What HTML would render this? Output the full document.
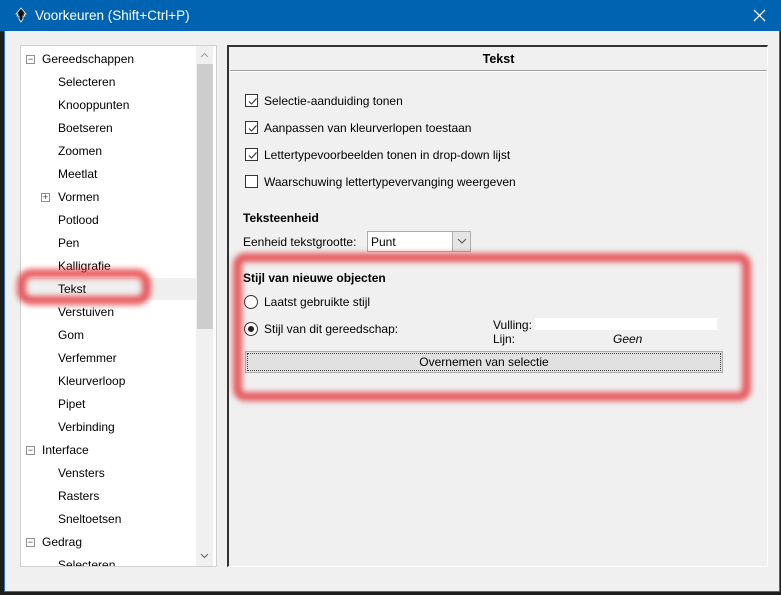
<!DOCTYPE html>
<html><head><meta charset="utf-8"><style>
*{box-sizing:border-box;margin:0;padding:0}
body{width:781px;height:595px;overflow:hidden;background:#1e1e1e;font-family:"Liberation Sans",sans-serif;font-size:12px;color:#000;position:relative}
.abs{position:absolute}
#win{left:4px;top:0;width:776px;height:592px;background:#f0f0f0;border:1px solid #2b6fb5;border-top:none}
#title{left:0;top:0;width:781px;height:31px;background:#0063b1;color:#fff;font-size:13.5px}
#tree{left:20px;top:45px;width:197px;height:522px;background:#fff;border:1px solid #d0d0d0;overflow:hidden}
.ti{position:absolute;left:37px;height:22px;line-height:22px;font-size:12px;color:#000}
.tl{left:21px}
.pm{position:absolute;left:5px;width:9px;height:9px;border:1px solid #909090;font-size:9px;line-height:7px;text-align:center;color:#333}
#sb{left:196px;top:46px;width:17px;height:520px;background:#f0f0f0}
#thumb{left:197px;top:64px;width:16px;height:265px;background:#cdcdcd}
#right{left:227px;top:45px;width:541px;height:522px;border-top:2px solid #333;border-left:2px solid #333;border-right:1px solid #fff;border-bottom:1px solid #fff}
.cb{position:absolute;left:245px;width:13px;height:13px;border:1px solid #333;background:#fff}
.cb svg{position:absolute;left:1px;top:1px}
.lbl{position:absolute;left:264px;font-size:12px}
.red{position:absolute;border:9px solid rgba(225,40,45,.75);border-radius:12px;filter:blur(3px)}
.rad{position:absolute;left:244px;width:14px;height:14px;border:1px solid #333;border-radius:50%;background:#fff}
</style></head><body>
<div id="win" class="abs"></div>
<div id="title" class="abs">
<svg class="abs" style="left:13px;top:7px" width="16" height="16" viewBox="0 0 16 16"><path d="M8 1 L13 7 L11 7 L12 9 L10 9 L10 12 L8 15 L6 12 L6 9 L4 9 L5 7 L3 7 Z" fill="#111" stroke="#fff" stroke-width=".8"/></svg>
<span class="abs" style="left:35px;top:8px">Voorkeuren (Shift+Ctrl+P)</span>
<svg class="abs" style="left:753px;top:9px" width="13" height="13"><path d="M1 1L12 12M12 1L1 12" stroke="#fff" stroke-width="1.3"/></svg>
</div>
<div id="tree" class="abs">
<div class="pm" style="top:9px">−</div><div class="ti tl" style="top:2px">Gereedschappen</div>
<div class="ti" style="top:25px">Selecteren</div>
<div class="ti" style="top:48px">Knooppunten</div>
<div class="ti" style="top:71px">Boetseren</div>
<div class="ti" style="top:94px">Zoomen</div>
<div class="ti" style="top:117px">Meetlat</div>
<div class="pm" style="left:20px;top:147px">+</div><div class="ti" style="top:140px">Vormen</div>
<div class="ti" style="top:163px">Potlood</div>
<div class="ti" style="top:186px">Pen</div>
<div class="ti" style="top:209px">Kalligrafie</div>
<div class="abs" style="left:0;top:232px;width:176px;height:22px;background:#efefef"></div>
<div class="ti" style="top:232px">Tekst</div>
<div class="ti" style="top:255px">Verstuiven</div>
<div class="ti" style="top:278px">Gom</div>
<div class="ti" style="top:301px">Verfemmer</div>
<div class="ti" style="top:324px">Kleurverloop</div>
<div class="ti" style="top:347px">Pipet</div>
<div class="ti" style="top:370px">Verbinding</div>
<div class="pm" style="top:400px">−</div><div class="ti tl" style="top:393px">Interface</div>
<div class="ti" style="top:416px">Vensters</div>
<div class="ti" style="top:439px">Rasters</div>
<div class="ti" style="top:462px">Sneltoetsen</div>
<div class="pm" style="top:492px">−</div><div class="ti tl" style="top:485px">Gedrag</div>
<div class="ti" style="top:508px">Selecteren</div>
</div>
<div id="sb" class="abs"></div>
<div id="thumb" class="abs"></div>
<svg class="abs" style="left:200px;top:52px" width="9" height="6"><path d="M1 5L4.5 1.5L8 5" stroke="#a0a0a0" fill="none"/></svg>
<svg class="abs" style="left:200px;top:553px" width="9" height="6"><path d="M1 1L4.5 4.5L8 1" stroke="#606060" fill="none"/></svg>
<div id="right" class="abs"></div>
<div class="abs" style="left:230px;top:70px;width:537px;height:2px;border-top:1px solid #a0a0a0;border-bottom:1px solid #fff"></div>
<div class="abs" style="left:230px;top:52px;width:537px;text-align:center;font-weight:bold;font-size:12.5px">Tekst</div>

<div class="cb" style="top:94px"><svg width="11" height="11"><path d="M2 5.5L4.5 8L9.5 2.5" stroke="#333" fill="none" stroke-width="1.1"/></svg></div>
<div class="lbl" style="top:94px">Selectie-aanduiding tonen</div>
<div class="cb" style="top:121px"><svg width="11" height="11"><path d="M2 5.5L4.5 8L9.5 2.5" stroke="#333" fill="none" stroke-width="1.1"/></svg></div>
<div class="lbl" style="top:121px">Aanpassen van kleurverlopen toestaan</div>
<div class="cb" style="top:148px"><svg width="11" height="11"><path d="M2 5.5L4.5 8L9.5 2.5" stroke="#333" fill="none" stroke-width="1.1"/></svg></div>
<div class="lbl" style="top:148px">Lettertypevoorbeelden tonen in drop-down lijst</div>
<div class="cb" style="top:175px"></div>
<div class="lbl" style="top:175px">Waarschuwing lettertypevervanging weergeven</div>

<div class="abs" style="left:243px;top:211px;font-weight:bold">Teksteenheid</div>
<div class="abs" style="left:243px;top:235px">Eenheid tekstgrootte:</div>
<div class="abs" style="left:367px;top:231px;width:104px;height:21px;border:1px solid #adadad;background:#fff"><span class="abs" style="left:3px;top:3px">Punt</span>
<div class="abs" style="left:84px;top:0;width:18px;height:19px;background:#e5e5e5;border-left:1px solid #adadad"><svg class="abs" style="left:4px;top:6px" width="10" height="6"><path d="M1 1L5 5L9 1" stroke="#555" fill="none"/></svg></div></div>

<div class="abs" style="left:243px;top:271px;font-weight:bold">Stijl van nieuwe objecten</div>
<div class="rad" style="top:295px"></div>
<div class="lbl" style="top:295px">Laatst gebruikte stijl</div>
<div class="rad" style="top:322px"><div class="abs" style="left:3px;top:3px;width:6px;height:6px;border-radius:50%;background:#222"></div></div>
<div class="lbl" style="top:322px">Stijl van dit gereedschap:</div>
<div class="abs" style="left:493px;top:318px">Vulling:</div>
<div class="abs" style="left:535px;top:318px;width:182px;height:12px;background:#fff"></div>
<div class="abs" style="left:493px;top:332px">Lijn:</div>
<div class="abs" style="left:613px;top:332px;font-style:italic">Geen</div>
<div class="abs" style="left:245px;top:351px;width:478px;height:22px;background:#e1e1e1;border:1px solid #adadad;outline:1px dotted #444;outline-offset:-3px;text-align:center;line-height:20px">Overnemen van selectie</div>

<div class="red" style="left:17px;top:269px;width:134px;height:36px;border-radius:14px"></div>
<div class="red" style="left:233px;top:253px;width:518px;height:148px"></div>
</body></html>
